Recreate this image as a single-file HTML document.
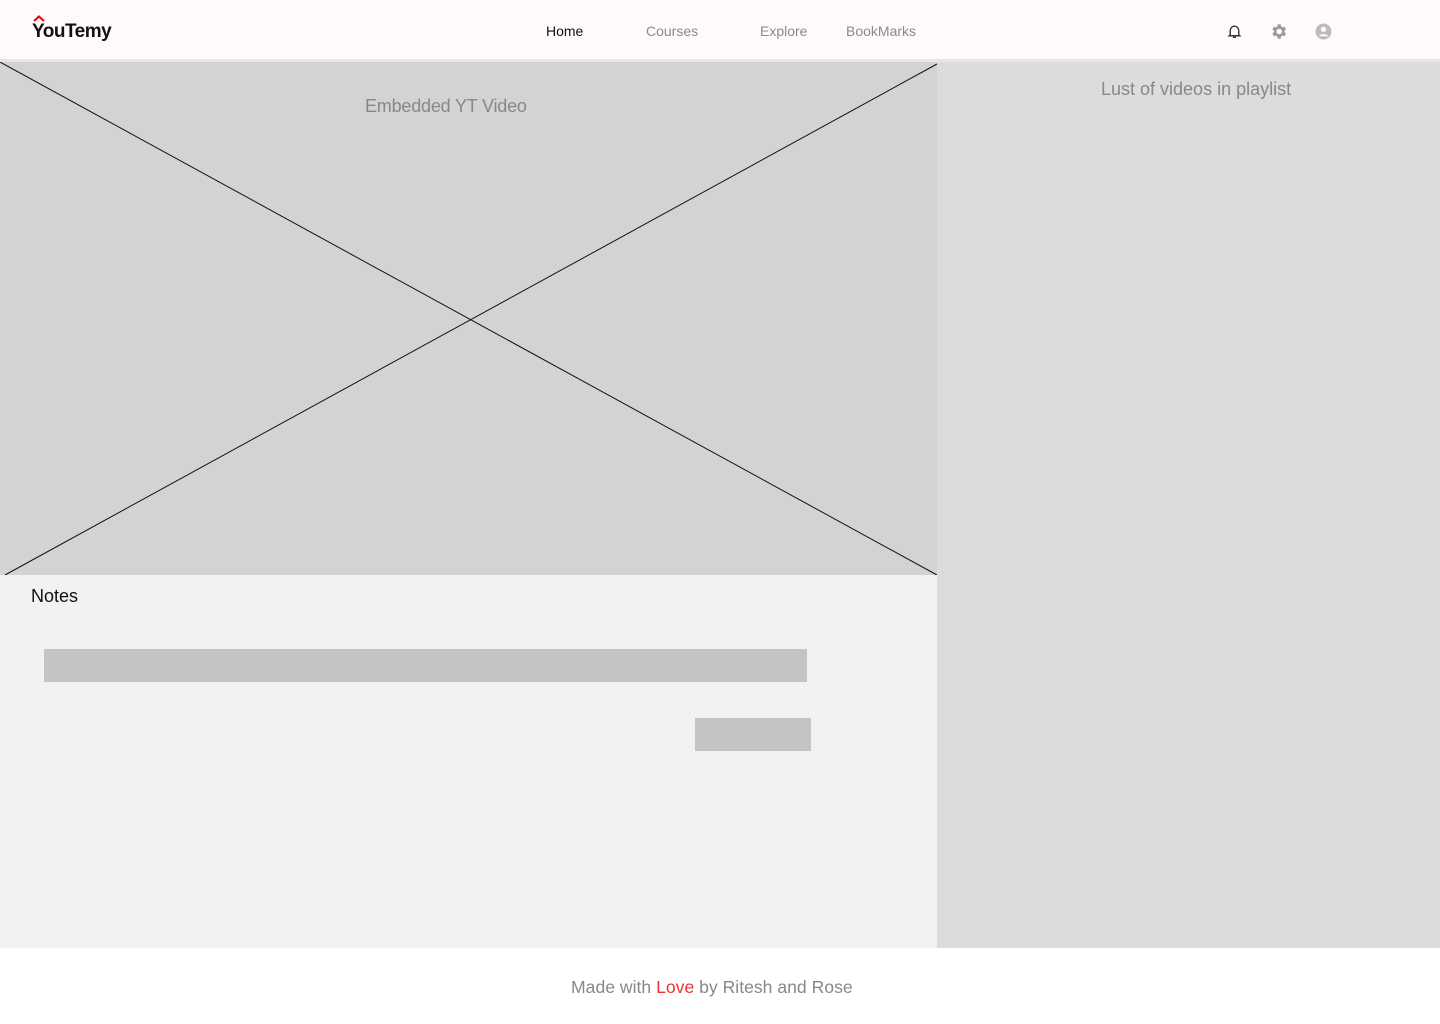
<!DOCTYPE html>
<html><head><style>
*{margin:0;padding:0;box-sizing:border-box}
body{width:1440px;height:1024px;background:#fff;font-family:"Liberation Sans",sans-serif;position:relative;overflow:hidden}
.hdr{position:absolute;left:0;top:0;width:1440px;height:59px;background:#fffaf9}
.sep{position:absolute;left:0;top:59px;width:1440px;height:3px;background:#e6e6e6}
.nav{position:absolute;top:23px;font-size:14px;color:#8a8a8a}
.abs{position:absolute}
</style></head><body>
<div class="hdr"></div><div class="sep"></div>
<svg class="abs" style="left:33px;top:15px" width="14" height="8"><path d="M1 6 L6 1.5 L11 6" stroke="#e00" stroke-width="2" fill="none"/></svg>
<div class="abs" style="left:32px;top:21px;font-size:19px;font-weight:bold;color:#111;letter-spacing:-0.5px">YouTemy</div>
<div class="nav" style="left:546px;color:#111">Home</div>
<div class="nav" style="left:646px">Courses</div>
<div class="nav" style="left:760px">Explore</div>
<div class="nav" style="left:846px">BookMarks</div>
<svg class="abs" style="left:1226px;top:23px" width="17" height="17" viewBox="0 0 16 16"><path d="M4 11 V7 a4 4 0 0 1 8 0 V11 L13 12 H3 Z" stroke="#333" stroke-width="1.3" fill="none"/><path d="M6.5 13.5 h3" stroke="#333" stroke-width="1.3"/></svg>
<svg class="abs" style="left:1269px;top:22px" width="19" height="19" viewBox="0 0 24 24"><path fill="#999" d="M19.4 13a7.5 7.5 0 0 0 0-2l2.1-1.6-2-3.5-2.5 1a7 7 0 0 0-1.7-1L14.9 3h-4l-.4 2.9a7 7 0 0 0-1.7 1l-2.5-1-2 3.5L6.4 11a7.5 7.5 0 0 0 0 2l-2.1 1.6 2 3.5 2.5-1a7 7 0 0 0 1.7 1l.4 2.9h4l.4-2.9a7 7 0 0 0 1.7-1l2.5 1 2-3.5zM12.9 15.5a3.5 3.5 0 1 1 0-7 3.5 3.5 0 0 1 0 7z"/></svg>
<svg class="abs" style="left:1315px;top:23px" width="17" height="17" viewBox="0 0 16 16"><circle cx="8" cy="8" r="7.5" fill="#bbb"/><circle cx="8" cy="6" r="2.5" fill="#fffaf9"/><path d="M3.5 12.5 a5 3.5 0 0 1 9 0" fill="#fffaf9"/></svg>
<div class="abs" style="left:0;top:62px;width:937px;height:513px;background:#d3d3d3"></div>
<svg class="abs" style="left:0;top:62px" width="937" height="514"><line x1="0" y1="0" x2="937" y2="513" stroke="#111" stroke-width="1"/><line x1="5" y1="513" x2="937" y2="2" stroke="#111" stroke-width="1"/></svg>
<div class="abs" style="left:365px;top:96px;font-size:18px;color:#888;letter-spacing:-0.2px">Embedded YT Video</div>
<div class="abs" style="left:937px;top:62px;width:503px;height:886px;background:#dcdcdc"></div>
<div class="abs" style="left:1101px;top:79px;font-size:18px;color:#888">Lust of videos in playlist</div>
<div class="abs" style="left:0;top:575px;width:937px;height:373px;background:#f2f2f2"></div>
<div class="abs" style="left:31px;top:586px;font-size:18px;color:#111">Notes</div>
<div class="abs" style="left:44px;top:649px;width:763px;height:33px;background:#c4c4c4"></div>
<div class="abs" style="left:695px;top:718px;width:116px;height:33px;background:#c4c4c4"></div>
<div class="abs" style="left:571px;top:977px;font-size:17.6px;color:#888">Made with <span style="color:#e33">Love</span> by Ritesh and Rose</div>
</body></html>
